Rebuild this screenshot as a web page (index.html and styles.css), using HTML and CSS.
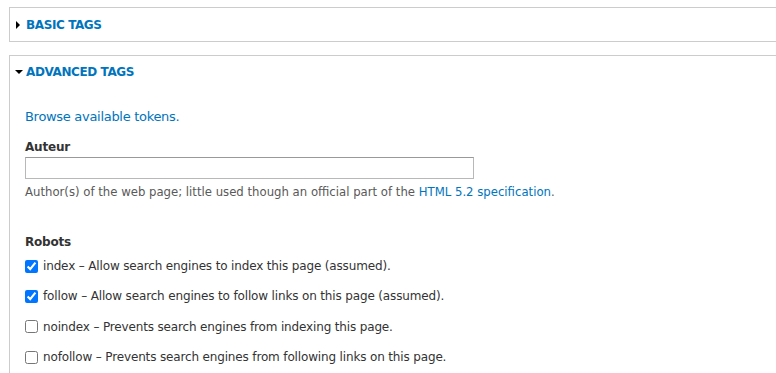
FILE: index.html
```html
<!DOCTYPE html>
<html lang="en">
<head>
  <meta charset="UTF-8" />
  <meta name="viewport" content="width=device-width, initial-scale=1.0" />
  <title>Metatags</title>
  <link rel="stylesheet" href="styles.css">
</head>
<body>
  <div class="page">
    <details class="fieldset">
      <summary class="fieldset-title">Basic tags</summary>
    </details>

    <details class="fieldset" open>
      <summary class="fieldset-title">Advanced tags</summary>
      <div class="fieldset-wrapper">
        <a class="tokens" href="#">Browse available tokens.</a>

        <div class="form-item">
          <label class="form-label" for="author">Auteur</label>
          <input class="form-text" id="author" type="text" />
          <div class="description">Author(s) of the web page; little used though an official part of the <a href="#">HTML 5.2 specification</a>.</div>
        </div>

        <div class="form-item">
          <div class="form-label">Robots</div>
          <div class="checkboxes">
            <label class="check"><input type="checkbox" checked /> index – Allow search engines to index this page (assumed).</label>
            <label class="check"><input type="checkbox" checked /> follow – Allow search engines to follow links on this page (assumed).</label>
            <label class="check"><input type="checkbox" /> noindex – Prevents search engines from indexing this page.</label>
            <label class="check"><input type="checkbox" /> nofollow – Prevents search engines from following links on this page.</label>
          </div>
        </div>
      </div>
    </details>
  </div>
</body>
</html>
```

FILE: styles.css
```css
html, body {
  overflow: hidden;
}

body {
  margin: 0;
  font-family: "DejaVu Sans", "Lucida Grande", sans-serif;
  font-size: 12px;
  color: #333;
  background: #fff;
}

a {
  color: #0074bd;
  text-decoration: none;
}

.page {
  padding: 7px 0 0 9px;
  margin-right: -30px;
}

.fieldset {
  border: 1px solid #ccc;
  margin-bottom: 13px;
}

.fieldset-title {
  list-style: none;
  display: flex;
  align-items: center;
  height: 33px;
  padding-left: 6px;
  color: #0074bd;
  font-weight: bold;
  font-size: 12px;
  letter-spacing: -0.4px;
  text-transform: uppercase;
  cursor: pointer;
}

.fieldset-title::-webkit-details-marker {
  display: none;
}

.fieldset-title::before {
  content: "";
  width: 0;
  height: 0;
  margin-right: 6px;
  border-top: 4px solid transparent;
  border-bottom: 4px solid transparent;
  border-left: 4px solid #000;
}

.fieldset[open] .fieldset-title {
  height: 32px;
  padding-left: 5px;
}

.fieldset[open] .fieldset-title::before {
  margin-right: 3px;
  border-top: 4px solid #000;
  border-left: 4px solid transparent;
  border-right: 4px solid transparent;
  border-bottom: 0;
}

.fieldset-wrapper {
  padding: 20px 15px 20px 15px;
}

.tokens {
  display: block;
  font-size: 13px;
  letter-spacing: -0.3px;
  line-height: 18px;
}

.form-item {
  margin-top: 13px;
}

.form-item + .form-item {
  margin-top: 34px;
}

.form-label {
  display: block;
  font-weight: bold;
  line-height: 16px;
  letter-spacing: -0.2px;
  margin-bottom: 2px;
}

.form-text {
  display: block;
  box-sizing: border-box;
  width: 449px;
  height: 22px;
  margin: 0;
  padding: 2px 4px;
  border: 1px solid #b8b8b8;
  border-top-color: #999;
  border-radius: 0;
  font: inherit;
}

.description {
  margin-top: 5px;
  font-size: 11.7px;
  line-height: 16px;
  color: #595959;
}

.checkboxes {
  display: flex;
  flex-direction: column;
  gap: 14.4px;
  margin-top: 8px;
}

.check {
  display: flex;
  align-items: center;
  gap: 5px;
  height: 16px;
  line-height: 16px;
  letter-spacing: -0.15px;
}

.check input {
  margin: 0;
  width: 13px;
  height: 13px;
}
```
